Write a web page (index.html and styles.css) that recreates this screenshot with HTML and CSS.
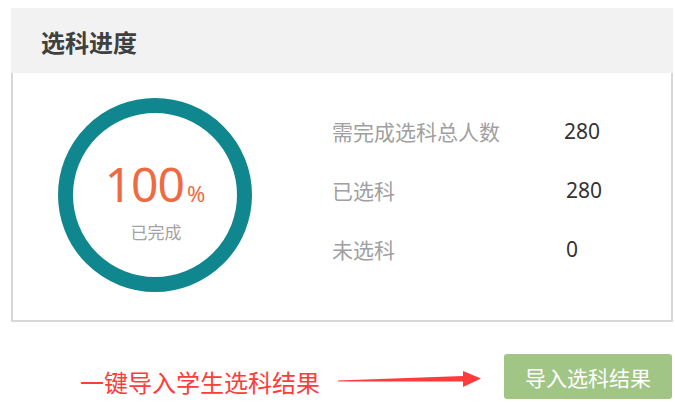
FILE: index.html
```html
<!DOCTYPE html>
<html>

<head>
	<meta http-equiv="content-type" content="text/html; charset=utf-8" />
	<title>选科进度</title>
	<link rel="stylesheet" href="styles.css">
</head>

<body>
	<div class="panel">
		<div class="panel-head">选科进度</div>
		<div class="panel-body">
			<div class="ring">
				<svg class="ring-svg" width="194" height="194" viewBox="0 0 194 194">
					<circle cx="97" cy="97" r="89.5" fill="none" stroke="#10868e" stroke-width="15" />
				</svg>
				<div class="ring-text">
					<div class="percent">100<span class="percent-sign">%</span></div>
					<div class="done">已完成</div>
				</div>
			</div>
			<div class="stats">
				<div class="stat-label">需完成选科总人数</div>
				<div class="stat-value">280</div>
				<div class="stat-label">已选科</div>
				<div class="stat-value shift">280</div>
				<div class="stat-label">未选科</div>
				<div class="stat-value shift">0</div>
			</div>
		</div>
	</div>

	<div class="footer">
		<span class="hint">一键导入学生选科结果</span>
		<svg class="arrow" width="144" height="18" viewBox="0 0 144 18">
			<polygon points="0,10.5 125,6 125,1 143,8.5 125,17 125,11.5 0,11.5" fill="#ff3b3b" />
		</svg>
		<button class="import-btn" type="button">导入选科结果</button>
	</div>
</body>

</html>
```

FILE: styles.css
```css
body {
	font-family: "Noto Sans", "Noto Sans CJK SC", sans-serif;
	background-color: #fff;
	margin: 0;
	padding: 8px 2px 0 11px;
}

/* Panel with grey title bar */
.panel {
	width: 662px;
}

.panel-head {
	height: 65px;
	background-color: #f2f2f2;
	padding-left: 30px;
	box-sizing: border-box;
	font-family: "Noto Sans CJK SC", sans-serif;
	font-size: 24px;
	font-weight: bold;
	line-height: 68px;
	color: #404040;
}

.panel-body {
	display: flex;
	align-items: flex-start;
	height: 249px;
	box-sizing: border-box;
	border: 2px solid #d8d8d8;
	border-top: none;
	padding-left: 45px;
}

/* Progress ring */
.ring {
	position: relative;
	width: 194px;
	height: 194px;
	margin-top: 25px;
}

.ring-svg {
	display: block;
}

.ring-text {
	position: absolute;
	top: 0;
	left: 0;
	width: 100%;
	height: 100%;
	display: flex;
	flex-direction: column;
	align-items: center;
	justify-content: center;
}

.percent {
	color: #ef6a41;
	font-size: 48px;
	line-height: 50px;
	margin-top: 12px;
	letter-spacing: -1px;
}

.percent-sign {
	font-size: 22px;
	margin-left: 3px;
	letter-spacing: 0;
}

.done {
	font-family: "Noto Sans CJK SC", sans-serif;
	color: #a3a3a3;
	font-size: 17px;
	line-height: 22px;
	margin-top: 3px;
	margin-left: 2px;
}

/* Numbers on the right */
.stats {
	display: grid;
	grid-template-columns: 232px auto;
	grid-auto-rows: 59px;
	align-items: center;
	margin-left: 80px;
	margin-top: 28px;
}

.stat-label {
	font-family: "Noto Sans CJK SC", sans-serif;
	font-size: 21px;
	color: #a0a0a0;
}

.stat-value {
	font-size: 21px;
	color: #333;
}

.stat-value.shift {
	margin-left: 2px;
}

/* Import row */
.footer {
	display: flex;
	align-items: center;
	margin-top: 32px;
	height: 45px;
}

.hint {
	flex-shrink: 0;
	white-space: nowrap;
	font-family: "Noto Sans CJK SC", sans-serif;
	font-size: 24px;
	line-height: 30px;
	color: #ff3b3b;
	margin-left: 69px;
	margin-top: 10px;
}

.arrow {
	display: block;
	flex-shrink: 0;
	margin-left: 18px;
	margin-top: 4px;
}

.import-btn {
	flex-shrink: 0;
	margin-left: 22px;
	width: 168px;
	height: 45px;
	border: none;
	border-radius: 3px;
	background-color: #a0c585;
	color: #fff;
	font-family: "Noto Sans CJK SC", sans-serif;
	font-size: 21px;
	cursor: pointer;
}
```
